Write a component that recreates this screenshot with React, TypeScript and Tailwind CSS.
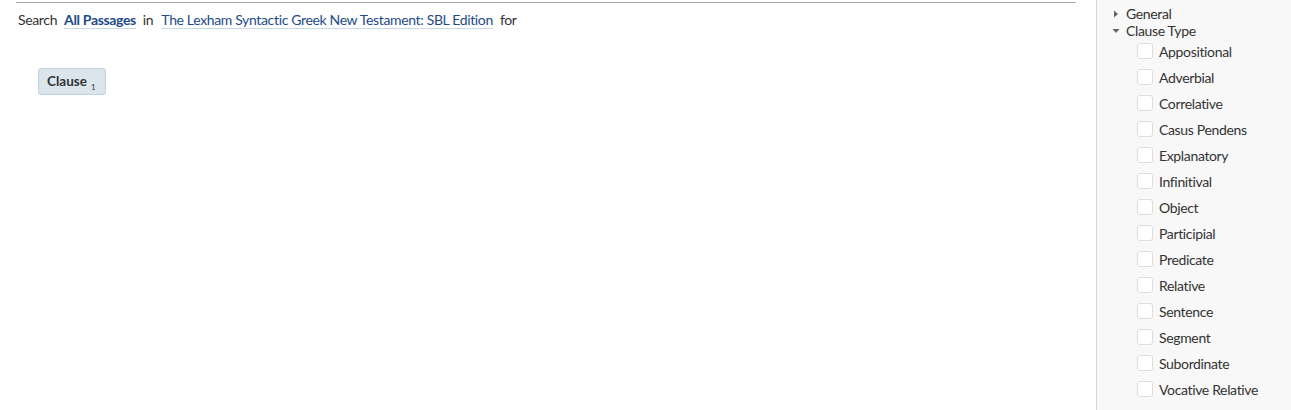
const clauseTypes = [
  'Appositional',
  'Adverbial',
  'Correlative',
  'Casus Pendens',
  'Explanatory',
  'Infinitival',
  'Object',
  'Participial',
  'Predicate',
  'Relative',
  'Sentence',
  'Segment',
  'Subordinate',
  'Vocative Relative',
]

export default function App() {
  return (
    <div className="flex h-[410px] w-[1291px] bg-white text-[14px] tracking-[-0.35px] text-[#333] font-['Lato','Liberation_Sans',sans-serif]">
      <div className="flex-1 pl-4 pr-5 pt-[2px]">
        <div className="border-t border-[#a9a9a9]" />
        <div className="flex items-center pl-[2px] pt-[7px] h-[26px]">
          <span>Search</span>
          <a className="ml-[7px] font-bold text-[#1d4b87] border-b border-[#c9d8e6] leading-[17px]">All Passages</a>
          <span className="ml-[7px]">in</span>
          <a className="ml-[8px] text-[#1d4b87] border-b border-[#c9d8e6] leading-[17px]">
            The Lexham Syntactic Greek New Testament: SBL Edition
          </a>
          <span className="ml-[7px]">for</span>
        </div>
        <div className="pl-[22px] pt-[39px]">
          <div className="inline-flex h-[27px] items-center pl-[8px] pr-[9px] rounded-[3px] border border-[#c5d1d9] bg-[#dbe5ec] text-[13.5px] tracking-normal font-bold text-[#333]">
            Clause<sub className="ml-[4px] mt-[6px] text-[8px] font-normal">1</sub>
          </div>
        </div>
      </div>
      <div className="w-[195px] border-l border-[#d6d6d6] bg-[#f8f8f8] pl-[15px] pt-[5px]">
        <div className="flex items-center h-[17px]">
          <svg width="6" height="8" viewBox="0 0 6 8" className="mr-[7px] ml-[1px]">
            <path d="M1 0.5 L5 4 L1 7.5 Z" fill="#666" />
          </svg>
          <span>General</span>
        </div>
        <div className="flex items-center h-[17px]">
          <svg width="8" height="6" viewBox="0 0 8 6" className="mr-[6px]">
            <path d="M0.5 1 L7.5 1 L4 5 Z" fill="#666" />
          </svg>
          <span>Clause Type</span>
        </div>
        <div className="pl-[25px]">
          {clauseTypes.map((t) => (
            <div key={t} className="flex items-center h-[26px] first:-mt-[1px]">
              <span className="w-[16px] h-[16px] rounded-[3px] border border-[#ddd] bg-white mr-[6px]" />
              <span>{t}</span>
            </div>
          ))}
        </div>
      </div>
    </div>
  )
}
